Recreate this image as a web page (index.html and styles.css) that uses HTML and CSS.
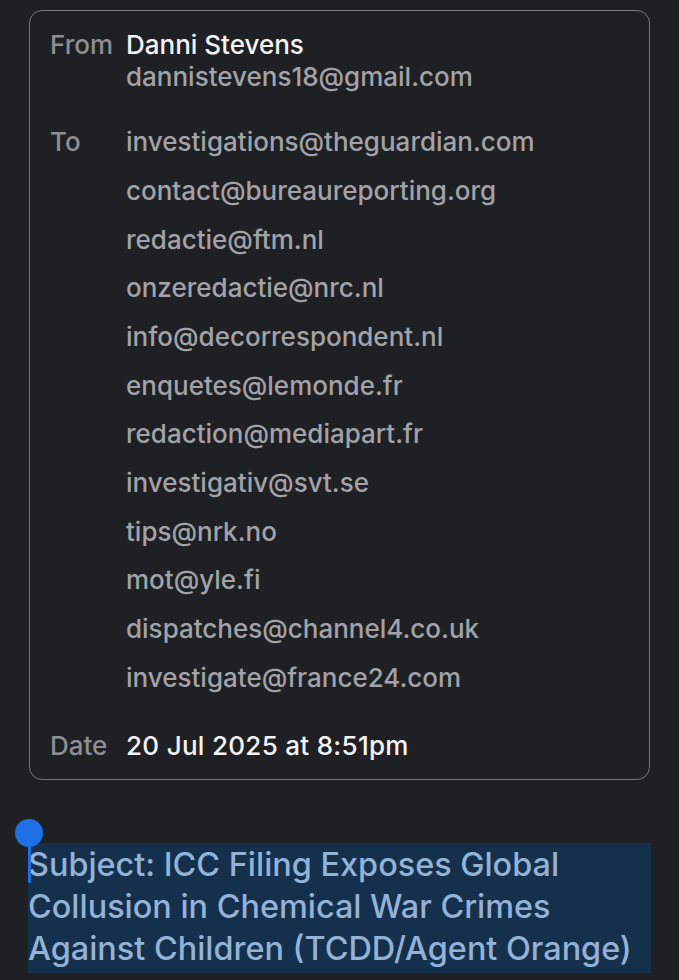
FILE: index.html
```html
<!DOCTYPE html>
<html>
<head>
<meta charset="utf-8">
<link rel="stylesheet" href="styles.css">
</head>
<body>
<div class="page">
  <div class="card">
    <div class="row from">
      <div class="label">From</div>
      <div class="value">
        <div class="name">Danni Stevens</div>
        <div class="addr">dannistevens18@gmail.com</div>
      </div>
    </div>
    <div class="row to">
      <div class="label">To</div>
      <div class="value list">
        <div>investigations@theguardian.com</div>
        <div>contact@bureaureporting.org</div>
        <div>redactie@ftm.nl</div>
        <div>onzeredactie@nrc.nl</div>
        <div>info@decorrespondent.nl</div>
        <div>enquetes@lemonde.fr</div>
        <div>redaction@mediapart.fr</div>
        <div>investigativ@svt.se</div>
        <div>tips@nrk.no</div>
        <div>mot@yle.fi</div>
        <div>dispatches@channel4.co.uk</div>
        <div>investigate@france24.com</div>
      </div>
    </div>
    <div class="row date">
      <div class="label">Date</div>
      <div class="value name when">20 Jul 2025 at 8:51pm</div>
    </div>
  </div>
  <div class="subject-wrap">
    <span class="handle"></span>
    <span class="caret"></span>
    <div class="subject">Subject: ICC Filing Exposes Global Collusion in Chemical War Crimes Against Children (TCDD/Agent Orange)</div>
  </div>
</div>
</body>
</html>
```
FILE: styles.css
```css
html, body {
  margin: 0;
  padding: 0;
  background: #1f2024;
}
body {
  font-family: Inter, "Noto Sans", sans-serif;
  width: 679px;
  height: 980px;
  overflow: hidden;
}
.page {
  padding: 10px 29px 0 28px;
}
.card {
  margin-left: 1px;
  width: 621px;
  box-sizing: border-box;
  height: 770px;
  border: 1.5px solid #77787c;
  border-radius: 13px;
  padding: 17.5px 20px 0 20px;
}
.row {
  display: flex;
  font-size: 26px;
  line-height: 32px;
  font-weight: 500;
}
.label {
  width: 76px;
  flex: none;
  color: #8e8f94;
}
.name {
  color: #f4f4f6;
}
.when {
  letter-spacing: 0.3px;
}
.addr {
  color: #a2a3a8;
}
.to {
  margin-top: 25.6px;
  line-height: 48.7px;
}
.list {
  color: #a2a3a8;
}
.date {
  margin-top: 27px;
}
.subject-wrap {
  position: relative;
  margin-top: 63px;
}
.subject {
  background: #15304c;
  color: #93b2d6;
  font-size: 32.4px;
  font-weight: 500;
  line-height: 42px;
  padding: 1px 16px 3px 0;
  width: 623px;
  box-sizing: border-box;
}
.handle {
  position: absolute;
  left: -13px;
  top: -24px;
  width: 28px;
  height: 28px;
  border-radius: 50%;
  background: #1d6fe3;
}
.caret {
  position: absolute;
  left: 0;
  top: -10px;
  width: 2.5px;
  height: 50px;
  background: #1d6fe3;
}
```
